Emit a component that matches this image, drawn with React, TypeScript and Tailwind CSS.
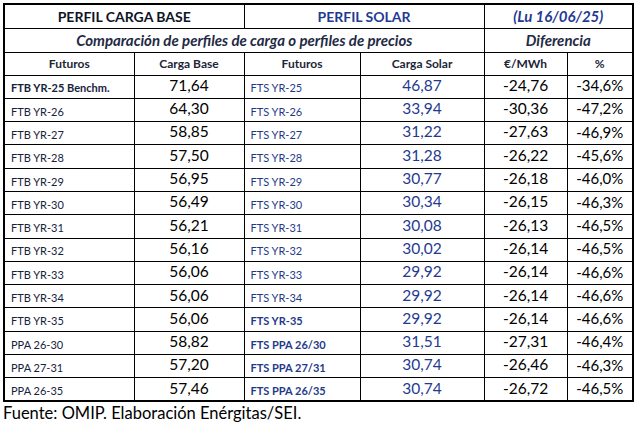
import React from "react";

type Row = { a: string; aBold?: boolean; b: string; c: string; cBold?: boolean; d: string; e: string; f: string };

const rows: Row[] = [
  { a: "FTB YR-25 Benchm.", aBold: true, b: "71,64", c: "FTS YR-25", d: "46,87", e: "-24,76", f: "-34,6%" },
  { a: "FTB YR-26", b: "64,30", c: "FTS YR-26", d: "33,94", e: "-30,36", f: "-47,2%" },
  { a: "FTB YR-27", b: "58,85", c: "FTS YR-27", d: "31,22", e: "-27,63", f: "-46,9%" },
  { a: "FTB YR-28", b: "57,50", c: "FTS YR-28", d: "31,28", e: "-26,22", f: "-45,6%" },
  { a: "FTB YR-29", b: "56,95", c: "FTS YR-29", d: "30,77", e: "-26,18", f: "-46,0%" },
  { a: "FTB YR-30", b: "56,49", c: "FTS YR-30", d: "30,34", e: "-26,15", f: "-46,3%" },
  { a: "FTB YR-31", b: "56,21", c: "FTS YR-31", d: "30,08", e: "-26,13", f: "-46,5%" },
  { a: "FTB YR-32", b: "56,16", c: "FTS YR-32", d: "30,02", e: "-26,14", f: "-46,5%" },
  { a: "FTB YR-33", b: "56,06", c: "FTS YR-33", d: "29,92", e: "-26,14", f: "-46,6%" },
  { a: "FTB YR-34", b: "56,06", c: "FTS YR-34", d: "29,92", e: "-26,14", f: "-46,6%" },
  { a: "FTB YR-35", b: "56,06", c: "FTS YR-35", cBold: true, d: "29,92", e: "-26,14", f: "-46,6%" },
  { a: "PPA 26-30", b: "58,82", c: "FTS PPA 26/30", cBold: true, d: "31,51", e: "-27,31", f: "-46,4%" },
  { a: "PPA 27-31", b: "57,20", c: "FTS PPA 27/31", cBold: true, d: "30,74", e: "-26,46", f: "-46,3%" },
  { a: "PPA 26-35", b: "57,46", c: "FTS PPA 26/35", cBold: true, d: "30,74", e: "-26,72", f: "-46,5%" },
];

const cell = "border border-black p-0";

export default function App() {
  return (
    <div
      className="w-[636px] h-[424px] bg-white pl-[3px] pt-[3px]"
      style={{ fontFamily: "Lato, 'Open Sans', sans-serif" }}
    >
      <table className="border-collapse border-2 border-black table-fixed w-[629px]">
        <colgroup>
          <col className="w-[130px]" />
          <col className="w-[110px]" />
          <col className="w-[116px]" />
          <col className="w-[124px]" />
          <col className="w-[83px]" />
          <col className="w-[66px]" />
        </colgroup>
        <tbody>
          <tr className="h-[23px]">
            <td colSpan={2} className={`${cell} text-center font-bold text-[14px] text-[#0d1424]`}>
              PERFIL CARGA BASE
            </td>
            <td colSpan={2} className={`${cell} text-center font-bold text-[14px] text-[#1f3a93]`}>
              PERFIL SOLAR
            </td>
            <td colSpan={2} className={`${cell} text-center font-bold italic text-[15px] text-[#1f3a93]`}>
              (Lu 16/06/25)
            </td>
          </tr>
          <tr className="h-[24px]">
            <td colSpan={4} className={`${cell} text-center font-bold italic text-[15px] text-[#1f2a44]`}>
              Comparación de perfiles de carga o perfiles de precios
            </td>
            <td colSpan={2} className={`${cell} text-center font-bold italic text-[15px] text-[#1f2a44]`}>
              Diferencia
            </td>
          </tr>
          <tr className="h-[23px]">
            {["Futuros", "Carga Base", "Futuros", "Carga Solar", "€/MWh", "%"].map((h, i) => (
              <td key={i} className={`${cell} text-center font-bold text-[12px] text-[#1c2638]`}>
                {h}
              </td>
            ))}
          </tr>
          {rows.map((r, i) => (
            <tr key={i} className="h-[23.3px]">
              <td className={`${cell} pl-[6px] text-[11px] text-[#17223b] ${r.aBold ? "font-bold" : "font-normal"}`}>
                <span className="relative top-[2px]">{r.a}</span>
              </td>
              <td className={`${cell} text-center text-[15.5px] text-black leading-none`}>
                <span className="relative -top-[1px]">{r.b}</span>
              </td>
              <td className={`${cell} pl-[6px] text-[11px] text-[#1f3a8a] ${r.cBold ? "font-bold" : "font-normal"}`}>
                <span className="relative top-[2px]">{r.c}</span>
              </td>
              <td className={`${cell} text-center text-[15.5px] text-[#1f3a8f] leading-none`}>
                <span className="relative -top-[1px]">{r.d}</span>
              </td>
              <td className={`${cell} text-center text-[15.5px] text-black leading-none`}>
                <span className="relative -top-[1px]">{r.e}</span>
              </td>
              <td className={`${cell} text-center text-[15px] text-black leading-none`}>
                <span className="relative -top-[1px]">{r.f}</span>
              </td>
            </tr>
          ))}
        </tbody>
      </table>
      <div className="text-[16.5px] text-black leading-[20px] mt-[1px]">
        Fuente: OMIP. Elaboración Enérgitas/SEI.
      </div>
    </div>
  );
}
